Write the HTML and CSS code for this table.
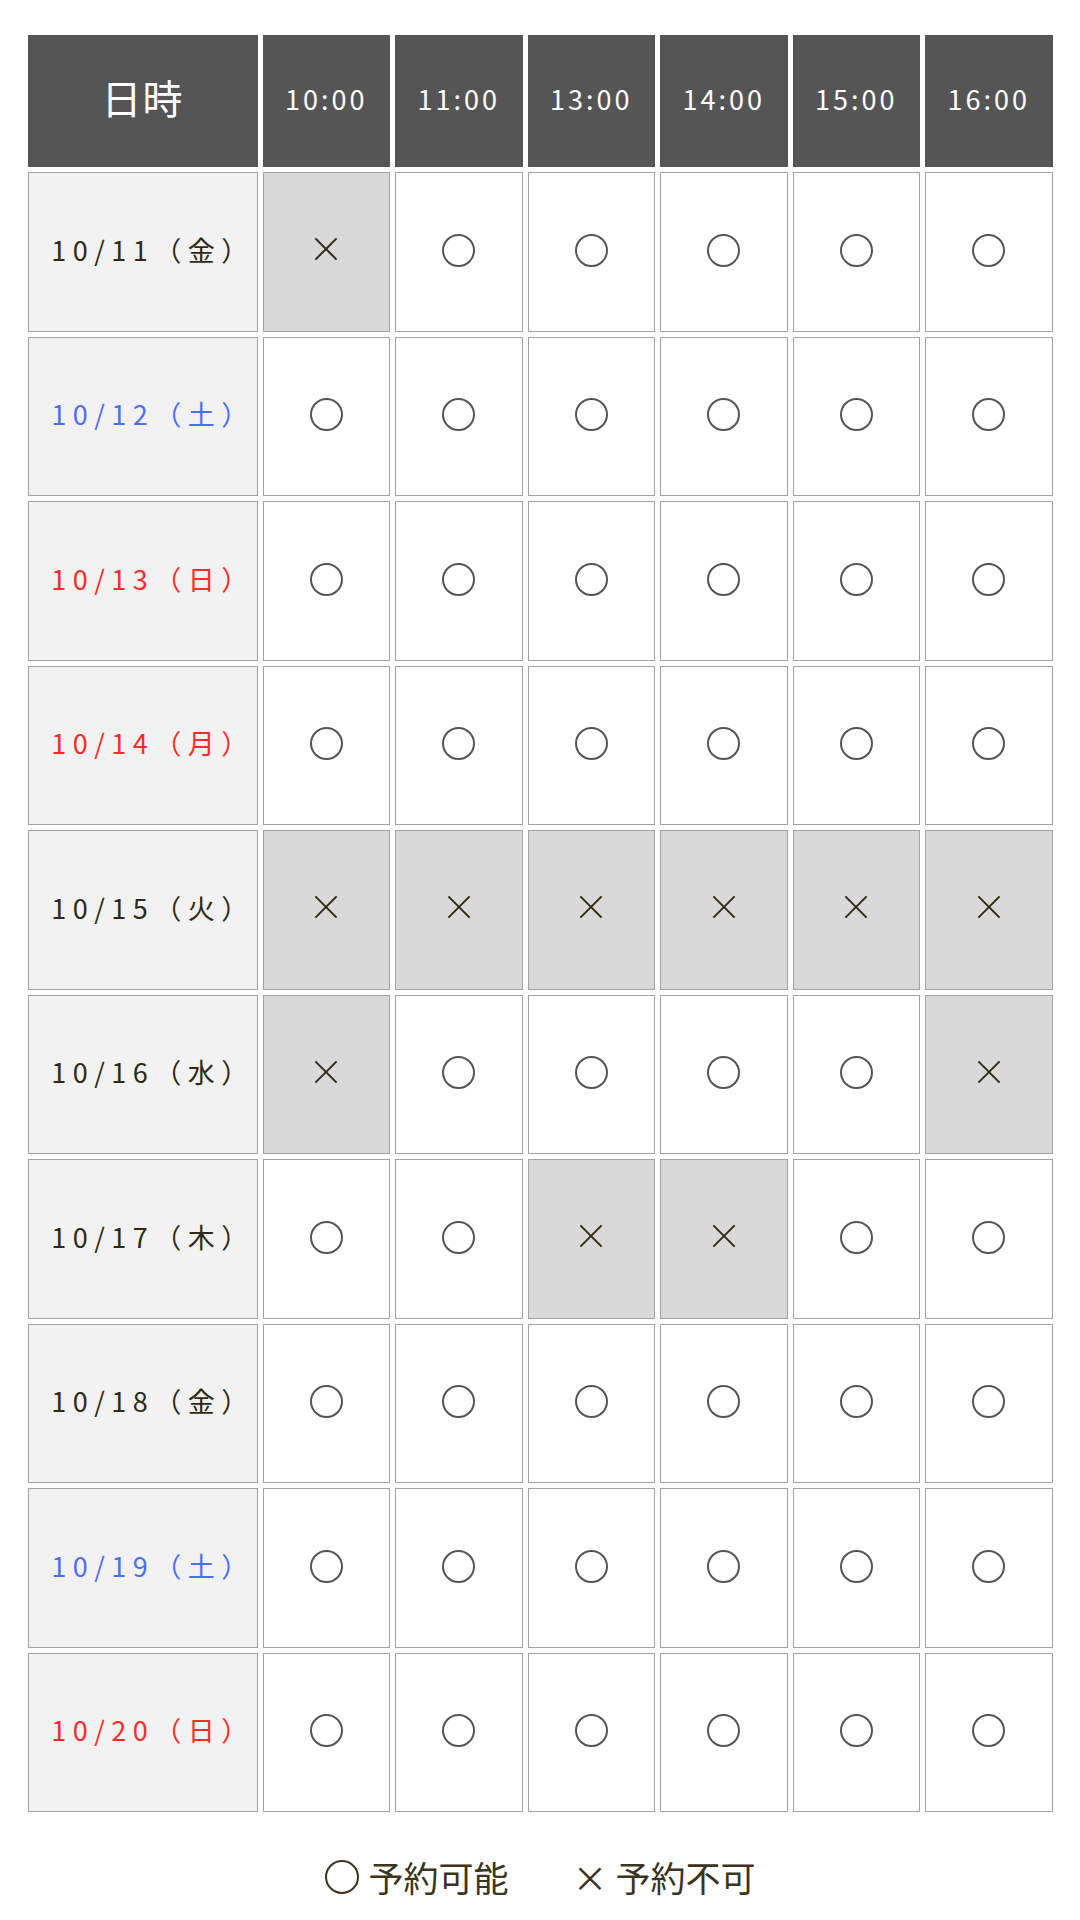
FILE: index.html
```html
<!DOCTYPE html>
<html lang="ja">
<head>
    <meta charset="UTF-8">
    <meta name="viewport" content="width=device-width, initial-scale=1.0">
    <title>予約状況</title>
    <link rel="stylesheet" href="styles.css">
</head>
<body>
    <div class="schedule">
        <table class="calendar">
            <colgroup>
                <col class="col-date">
                <col><col><col><col><col><col>
            </colgroup>
            <thead>
                <tr>
                    <th class="head-date">日時</th>
                    <th>10:00</th>
                    <th>11:00</th>
                    <th>13:00</th>
                    <th>14:00</th>
                    <th>15:00</th>
                    <th>16:00</th>
                </tr>
            </thead>
            <tbody>
                <tr>
                    <td class="date">10/11（金）</td>
                    <td class="full"><span class="mark-x"></span></td>
                    <td><span class="mark-o"></span></td>
                    <td><span class="mark-o"></span></td>
                    <td><span class="mark-o"></span></td>
                    <td><span class="mark-o"></span></td>
                    <td><span class="mark-o"></span></td>
                </tr>
                <tr>
                    <td class="date sat">10/12（土）</td>
                    <td><span class="mark-o"></span></td>
                    <td><span class="mark-o"></span></td>
                    <td><span class="mark-o"></span></td>
                    <td><span class="mark-o"></span></td>
                    <td><span class="mark-o"></span></td>
                    <td><span class="mark-o"></span></td>
                </tr>
                <tr>
                    <td class="date sun">10/13（日）</td>
                    <td><span class="mark-o"></span></td>
                    <td><span class="mark-o"></span></td>
                    <td><span class="mark-o"></span></td>
                    <td><span class="mark-o"></span></td>
                    <td><span class="mark-o"></span></td>
                    <td><span class="mark-o"></span></td>
                </tr>
                <tr>
                    <td class="date sun">10/14（月）</td>
                    <td><span class="mark-o"></span></td>
                    <td><span class="mark-o"></span></td>
                    <td><span class="mark-o"></span></td>
                    <td><span class="mark-o"></span></td>
                    <td><span class="mark-o"></span></td>
                    <td><span class="mark-o"></span></td>
                </tr>
                <tr>
                    <td class="date">10/15（火）</td>
                    <td class="full"><span class="mark-x"></span></td>
                    <td class="full"><span class="mark-x"></span></td>
                    <td class="full"><span class="mark-x"></span></td>
                    <td class="full"><span class="mark-x"></span></td>
                    <td class="full"><span class="mark-x"></span></td>
                    <td class="full"><span class="mark-x"></span></td>
                </tr>
                <tr>
                    <td class="date">10/16（水）</td>
                    <td class="full"><span class="mark-x"></span></td>
                    <td><span class="mark-o"></span></td>
                    <td><span class="mark-o"></span></td>
                    <td><span class="mark-o"></span></td>
                    <td><span class="mark-o"></span></td>
                    <td class="full"><span class="mark-x"></span></td>
                </tr>
                <tr>
                    <td class="date">10/17（木）</td>
                    <td><span class="mark-o"></span></td>
                    <td><span class="mark-o"></span></td>
                    <td class="full"><span class="mark-x"></span></td>
                    <td class="full"><span class="mark-x"></span></td>
                    <td><span class="mark-o"></span></td>
                    <td><span class="mark-o"></span></td>
                </tr>
                <tr>
                    <td class="date">10/18（金）</td>
                    <td><span class="mark-o"></span></td>
                    <td><span class="mark-o"></span></td>
                    <td><span class="mark-o"></span></td>
                    <td><span class="mark-o"></span></td>
                    <td><span class="mark-o"></span></td>
                    <td><span class="mark-o"></span></td>
                </tr>
                <tr>
                    <td class="date sat">10/19（土）</td>
                    <td><span class="mark-o"></span></td>
                    <td><span class="mark-o"></span></td>
                    <td><span class="mark-o"></span></td>
                    <td><span class="mark-o"></span></td>
                    <td><span class="mark-o"></span></td>
                    <td><span class="mark-o"></span></td>
                </tr>
                <tr>
                    <td class="date sun">10/20（日）</td>
                    <td><span class="mark-o"></span></td>
                    <td><span class="mark-o"></span></td>
                    <td><span class="mark-o"></span></td>
                    <td><span class="mark-o"></span></td>
                    <td><span class="mark-o"></span></td>
                    <td><span class="mark-o"></span></td>
                </tr>
            </tbody>
        </table>

        <!-- legend -->
        <div class="legend">
            <span class="legend-item"><span class="legend-o"></span>予約可能</span>
            <span class="legend-item">× 予約不可</span>
        </div>
    </div>
</body>
</html>
```

FILE: styles.css
```css
body {
    font-family: "Noto Sans CJK JP", "Noto Sans", sans-serif;
    background-color: #fff;
    color: #2e2a14;
    margin: 0;
    padding: 0;
}
.schedule {
    padding-top: 30px;
}
.calendar {
    width: 1035px;
    margin: 0 auto;
    table-layout: fixed;
    border-collapse: separate;
    border-spacing: 5px;
}
.col-date {
    width: 230px;
}
.calendar th,
.calendar td {
    box-sizing: border-box;
    text-align: center;
    vertical-align: middle;
    padding: 0;
}
.calendar th {
    height: 132px;
    padding-bottom: 5px;
    background-color: #555;
    color: #fff;
    font-weight: normal;
    font-size: 27px;
    letter-spacing: 3px;
}
.calendar th.head-date {
    font-size: 40px;
    letter-spacing: 1px;
    padding-bottom: 8px;
}
.calendar td {
    height: 159.5px;
    background-color: #fff;
    border: 1px solid #a3a3a3;
}
.calendar td.date {
    background-color: #f2f2f2;
    font-size: 27px;
    letter-spacing: 6.5px;
    padding-left: 21px;
    padding-bottom: 5px;
}
.calendar td.sat {
    color: #4d6ff7;
}
.calendar td.sun {
    color: #ff2a2a;
}
.calendar td.full {
    background-color: #d9d9d9;
}
.mark-o {
    display: inline-block;
    width: 33px;
    height: 33px;
    margin-bottom: 3px;
    border: 2px solid #555;
    border-radius: 50%;
    box-sizing: border-box;
    vertical-align: middle;
}
.mark-x {
    display: inline-block;
    position: relative;
    width: 22px;
    height: 22px;
    margin-bottom: 6px;
    vertical-align: middle;
}
.mark-x::before,
.mark-x::after {
    content: "";
    position: absolute;
    left: -4px;
    top: 10px;
    width: 30px;
    height: 2px;
    background-color: #2e2a14;
    transform: rotate(45deg);
}
.mark-x::after {
    transform: rotate(-45deg);
}
.legend {
    display: flex;
    justify-content: center;
    gap: 64px;
    margin-top: 36px;
    font-size: 35px;
    line-height: 48px;
    color: #3a3420;
}
.legend-item {
    display: flex;
    align-items: center;
}
.legend-o {
    display: inline-block;
    width: 34px;
    height: 34px;
    margin-right: 10px;
    border: 2px solid #3a3420;
    border-radius: 50%;
    box-sizing: border-box;
}
```
